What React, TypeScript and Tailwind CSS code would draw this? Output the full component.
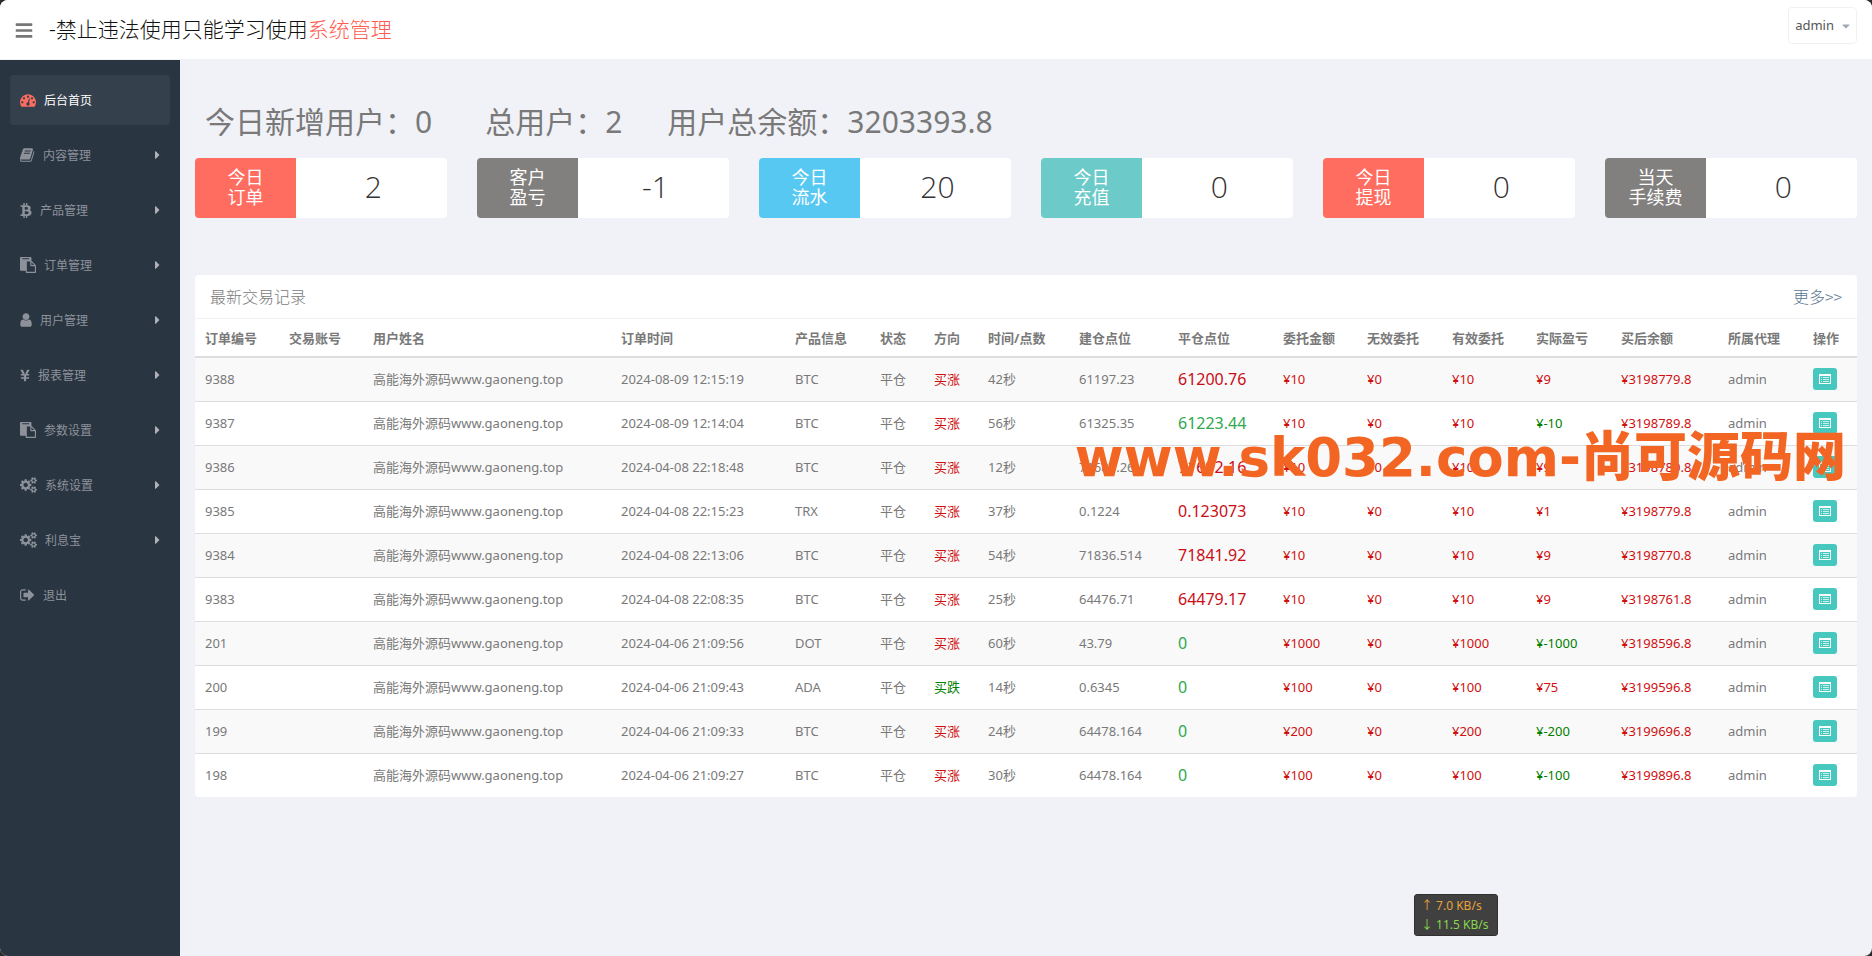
import React from "react"
import { FaBars, FaBtc, FaCaretDown, FaCaretRight, FaYenSign } from "react-icons/fa"

const GlyphIcon = ({ viewBox, className, d }: { viewBox: string; className: string; d: string }) => (
  <svg viewBox={viewBox} className={className} fill="currentColor" aria-hidden="true">
    <path d={d} />
  </svg>
)

const DashboardIcon = () => (
  <GlyphIcon
    viewBox="0 0 1792 1792"
    className="h-4 w-4 text-[#ff6c60]"
    d="M384 1152q0-53-37.5-90.5t-90.5-37.5-90.5 37.5-37.5 90.5 37.5 90.5 90.5 37.5 90.5-37.5 37.5-90.5zm192-448q0-53-37.5-90.5t-90.5-37.5-90.5 37.5-37.5 90.5 37.5 90.5 90.5 37.5 90.5-37.5 37.5-90.5zm428 481l101-382q6-26-7.5-48.5t-38.5-29.5-48 6.5-30 39.5l-101 382q-60 5-107 43.5t-63 98.5q-20 77 20 146t117 89 146-20 89-117q16-60-6-117t-72-91zm660-33q0-53-37.5-90.5t-90.5-37.5-90.5 37.5-37.5 90.5 37.5 90.5 90.5 37.5 90.5-37.5 37.5-90.5zm-640-640q0-53-37.5-90.5t-90.5-37.5-90.5 37.5-37.5 90.5 37.5 90.5 90.5 37.5 90.5-37.5 37.5-90.5zm448 192q0-53-37.5-90.5t-90.5-37.5-90.5 37.5-37.5 90.5 37.5 90.5 90.5 37.5 90.5-37.5 37.5-90.5zm320 448q0 261-141 483-19 29-54 29h-1402q-35 0-54-29-141-221-141-483 0-182 71-348t191-286 286-191 348-71 348 71 286 191 191 286 71 348z"
  />
)

const BookIcon = () => (
  <GlyphIcon
    viewBox="64 0 1664 1792"
    className="h-4 w-[15px]"
    d="M1639 478q40 57 18 129l-275 906q-19 64-76.5 107.5t-122.5 43.5h-923q-77 0-148.5-53.5t-99.5-131.5q-24-67-2-127 0-4 3-27t4-37q1-8-3-21.5t-3-19.5q2-11 8-21t16.5-23.5 16.5-23.5q23-38 45-91.5t30-91.5q3-10 .5-30t-.5-28q3-11 17-28t17-23q21-36 42-92t25-90q1-9-2.5-32t.5-28q4-13 22-30.5t22-22.5q19-26 42.5-84.5t27.5-96.5q1-8-3-25.5t-2-26.5q2-8 9-18t18-23 17-21q8-12 16.5-30.5t15-35 16-36 19.5-32 26.5-23.5 36-11.5 47.5 5.5l-1 3q38-9 51-9h761q74 0 114 56t18 130l-274 906q-36 119-71.5 153.5t-128.5 34.5h-869q-27 0-38 15-11 16-1 43 24 70 144 70h923q29 0 56-15.5t35-41.5l300-987q7-22 5-57 38 15 59 43zm-1064 2q-4 13 2 22.5t20 9.5h608q13 0 25.5-9.5t16.5-22.5l21-64q4-13-2-22.5t-20-9.5h-608q-13 0-25.5 9.5t-16.5 22.5zm-83 256q-4 13 2 22.5t20 9.5h608q13 0 25.5-9.5t16.5-22.5l21-64q4-13-2-22.5t-20-9.5h-608q-13 0-25.5 9.5t-16.5 22.5z"
  />
)

const PasteIcon = () => (
  <GlyphIcon
    viewBox="0 0 1792 1792"
    className="h-4 w-4"
    d="M768 1664h896v-640h-416q-40 0-68-28t-28-68v-416h-384v1152zm256-1440v-64q0-13-9.5-22.5t-22.5-9.5h-704q-13 0-22.5 9.5t-9.5 22.5v64q0 13 9.5 22.5t22.5 9.5h704q13 0 22.5-9.5t9.5-22.5zm256 672h299l-299-299v299zm512 128v672q0 40-28 68t-68 28h-960q-40 0-68-28t-28-68v-160h-544q-40 0-68-28t-28-68v-1344q0-40 28-68t68-28h1088q40 0 68 28t28 68v328q21 13 36 28l408 408q28 28 48 76t20 88z"
  />
)

const UserIcon = () => (
  <GlyphIcon
    viewBox="256 0 1280 1792"
    className="h-4 w-3"
    d="M1536 1399q0 109-62.5 187t-150.5 78h-854q-88 0-150.5-78t-62.5-187q0-85 8.5-160.5t31.5-152 58.5-131 94-89 134.5-34.5q131 128 313 128t313-128q76 0 134.5 34.5t94 89 58.5 131 31.5 152 8.5 160.5zm-256-887q0 159-112.5 271.5t-271.5 112.5-271.5-112.5-112.5-271.5 112.5-271.5 271.5-112.5 271.5 112.5 112.5 271.5z"
  />
)

const CogsIcon = () => (
  <GlyphIcon
    viewBox="0 0 1920 1792"
    className="h-4 w-[17px]"
    d="M896 896q0-106-75-181t-181-75-181 75-75 181 75 181 181 75 181-75 75-181zm768 512q0-52-38-90t-90-38-90 38-38 90q0 53 37.5 90.5t90.5 37.5 90.5-37.5 37.5-90.5zm0-1024q0-52-38-90t-90-38-90 38-38 90q0 53 37.5 90.5t90.5 37.5 90.5-37.5 37.5-90.5zm-384 421v185q0 10-7 19.5t-16 10.5l-155 24q-11 35-32 76 34 48 90 115 7 11 7 20 0 12-7 19-23 30-82.5 89.5t-78.5 59.5q-11 0-21-7l-115-90q-37 19-77 31-11 108-23 155-7 24-30 24h-186q-11 0-20-7.5t-10-17.5l-23-153q-34-10-75-31l-118 89q-7 7-20 7-11 0-21-8-144-133-144-160 0-9 7-19 10-14 41-53t47-61q-23-44-35-82l-152-24q-10-1-17-9.5t-7-19.5v-185q0-10 7-19.5t16-10.5l155-24q11-35 32-76-34-48-90-115-7-11-7-20 0-12 7-20 22-30 82-89t79-59q11 0 21 7l115 90q34-18 77-32 11-108 23-154 7-24 30-24h186q11 0 20 7.5t10 17.5l23 153q34 10 75 31l118-89q8-7 20-7 11 0 21 8 144 133 144 160 0 8-7 19-12 16-42 54t-45 60q23 48 34 82l152 23q10 2 17 10.5t7 19.5zm640 533v140q0 16-149 31-12 27-30 52 51 113 51 138 0 4-4 7-122 71-124 71-8 0-46-47t-52-68q-20 2-30 2t-30-2q-14 21-52 68t-46 47q-2 0-124-71-4-3-4-7 0-25 51-138-18-25-30-52-149-15-149-31v-140q0-16 149-31 13-29 30-52-51-113-51-138 0-4 4-7 4-2 35-20t59-34 30-16q8 0 46 46.5t52 67.5q20-2 30-2t30 2q51-71 92-112l6-2q4 0 124 70 4 3 4 7 0 25-51 138 17 23 30 52 149 15 149 31zm0-1024v140q0 16-149 31-12 27-30 52 51 113 51 138 0 4-4 7-122 71-124 71-8 0-46-47t-52-68q-20 2-30 2t-30-2q-14 21-52 68t-46 47q-2 0-124-71-4-3-4-7 0-25 51-138-18-25-30-52-149-15-149-31v-140q0-16 149-31 13-29 30-52-51-113-51-138 0-4 4-7 4-2 35-20t59-34 30-16q8 0 46 46.5t52 67.5q20-2 30-2t30 2q51-71 92-112l6-2q4 0 124 70 4 3 4 7 0 25-51 138 17 23 30 52 149 15 149 31z"
  />
)

const SignOutIcon = () => (
  <GlyphIcon
    viewBox="64 0 1664 1792"
    className="h-4 w-[15px]"
    d="M704 1440q0 4 1 20t.5 26.5-3 23.5-10 19.5-20.5 6.5h-320q-119 0-203.5-84.5t-84.5-203.5v-704q0-119 84.5-203.5t203.5-84.5h320q13 0 22.5 9.5t9.5 22.5q0 4 1 20t.5 26.5-3 23.5-10 19.5-20.5 6.5h-320q-66 0-113 47t-47 113v704q0 66 47 113t113 47h312l11.5 1 11.5 3 8 5.5 7 9 2 13.5zm928-544q0 26-19 45l-544 544q-19 19-45 19t-45-19-19-45v-288h-448q-26 0-45-19t-19-45v-384q0-26 19-45t45-19h448v-288q0-26 19-45t45-19 45 19l544 544q19 19 19 45z"
  />
)

const ListAltIcon = () => (
  <svg viewBox="0 0 12 10" className="h-[10px] w-3" aria-hidden="true">
    <rect x="0.5" y="0.5" width="11" height="9" fill="none" stroke="#fff" />
    <path d="M0 0h12v2H0z" fill="#fff" />
    <path d="M2 3.5h1M4 3.5h6M2 5.5h1M4 5.5h6M2 7.5h1M4 7.5h6" stroke="#c8f0ed" />
  </svg>
)

const menu = [
  { label: "后台首页", icon: <DashboardIcon />, active: true },
  { label: "内容管理", icon: <BookIcon />, sub: true },
  { label: "产品管理", icon: <FaBtc className="h-[15px] w-3" />, sub: true },
  { label: "订单管理", icon: <PasteIcon />, sub: true },
  { label: "用户管理", icon: <UserIcon />, sub: true },
  { label: "报表管理", icon: <FaYenSign className="h-[15px] w-[10px]" />, sub: true },
  { label: "参数设置", icon: <PasteIcon />, sub: true },
  { label: "系统设置", icon: <CogsIcon />, sub: true },
  { label: "利息宝", icon: <CogsIcon />, sub: true },
  { label: "退出", icon: <SignOutIcon /> },
]

const stats = [
  { label: ["今日", "订单"], value: "2", bg: "bg-[#ff6c60]" },
  { label: ["客户", "盈亏"], value: "-1", bg: "bg-[#82807e]" },
  { label: ["今日", "流水"], value: "20", bg: "bg-[#57c8f2]" },
  { label: ["今日", "充值"], value: "0", bg: "bg-[#6ccac9]" },
  { label: ["今日", "提现"], value: "0", bg: "bg-[#ff6c60]" },
  { label: ["当天", "手续费"], value: "0", bg: "bg-[#82807e]" },
]

const columns = [
  { title: "订单编号", width: "w-[84px]" },
  { title: "交易账号", width: "w-[84px]" },
  { title: "用户姓名", width: "w-[248px]" },
  { title: "订单时间", width: "w-[174px]" },
  { title: "产品信息", width: "w-[85px]" },
  { title: "状态", width: "w-[54px]" },
  { title: "方向", width: "w-[54px]" },
  { title: "时间/点数", width: "w-[91px]" },
  { title: "建仓点位", width: "w-[99px]" },
  { title: "平仓点位", width: "w-[105px]" },
  { title: "委托金额", width: "w-[84px]" },
  { title: "无效委托", width: "w-[85px]" },
  { title: "有效委托", width: "w-[84px]" },
  { title: "实际盈亏", width: "w-[85px]" },
  { title: "买后余额", width: "w-[107px]" },
  { title: "所属代理", width: "w-[85px]" },
  { title: "操作", width: "w-[54px]" },
]

type Order = {
  id: number
  time: string
  product: string
  up: boolean
  seconds: number
  open: string
  close: string
  closeUp: boolean
  amount: number
  profit: number
  balance: string
}

const orders: Order[] = [
  { id: 9388, time: "2024-08-09 12:15:19", product: "BTC", up: true, seconds: 42, open: "61197.23", close: "61200.76", closeUp: true, amount: 10, profit: 9, balance: "3198779.8" },
  { id: 9387, time: "2024-08-09 12:14:04", product: "BTC", up: true, seconds: 56, open: "61325.35", close: "61223.44", closeUp: false, amount: 10, profit: -10, balance: "3198789.8" },
  { id: 9386, time: "2024-04-08 22:18:48", product: "BTC", up: true, seconds: 12, open: "71689.26", close: "71692.16", closeUp: true, amount: 10, profit: 9, balance: "3198780.8" },
  { id: 9385, time: "2024-04-08 22:15:23", product: "TRX", up: true, seconds: 37, open: "0.1224", close: "0.123073", closeUp: true, amount: 10, profit: 1, balance: "3198779.8" },
  { id: 9384, time: "2024-04-08 22:13:06", product: "BTC", up: true, seconds: 54, open: "71836.514", close: "71841.92", closeUp: true, amount: 10, profit: 9, balance: "3198770.8" },
  { id: 9383, time: "2024-04-08 22:08:35", product: "BTC", up: true, seconds: 25, open: "64476.71", close: "64479.17", closeUp: true, amount: 10, profit: 9, balance: "3198761.8" },
  { id: 201, time: "2024-04-06 21:09:56", product: "DOT", up: true, seconds: 60, open: "43.79", close: "0", closeUp: false, amount: 1000, profit: -1000, balance: "3198596.8" },
  { id: 200, time: "2024-04-06 21:09:43", product: "ADA", up: false, seconds: 14, open: "0.6345", close: "0", closeUp: false, amount: 100, profit: 75, balance: "3199596.8" },
  { id: 199, time: "2024-04-06 21:09:33", product: "BTC", up: true, seconds: 24, open: "64478.164", close: "0", closeUp: false, amount: 200, profit: -200, balance: "3199696.8" },
  { id: 198, time: "2024-04-06 21:09:27", product: "BTC", up: true, seconds: 30, open: "64478.164", close: "0", closeUp: false, amount: 100, profit: -100, balance: "3199896.8" },
]

const Header = () => (
  <header className="flex h-[60px] items-start justify-between border-b border-[#f1f2f7] bg-white px-[15px]">
    <div className="flex h-[60px] items-center gap-4">
      <button type="button" aria-label="菜单" className="text-[#777]">
        <FaBars className="h-[19px] w-[18px]" />
      </button>
      <a href="#" className="pb-[2px] text-[21px] leading-[30px] font-light text-[#111]">
        -禁止违法使用只能学习使用<span className="text-[#ff5c50]">系统管理</span>
      </a>
    </div>
    <button
      type="button"
      className="mt-[7px] flex h-[37px] items-center gap-2 rounded border border-[#f1f1f4] px-[6px] text-[13px] text-[#555]"
    >
      admin
      <FaCaretDown className="h-3 w-2 text-[#a1a8b3]" />
    </button>
  </header>
)

const Sidebar = () => (
  <aside className="w-[180px] shrink-0 bg-[#2a3542] px-[10px] py-[15px]">
    <nav className="flex flex-col gap-[5px]">
      {menu.map((item) => (
        <a
          key={item.label}
          href="#"
          className={`flex h-[50px] items-center gap-2 rounded px-[10px] text-xs ${
            item.active ? "bg-[#35404d] text-white" : "text-[#8d929a]"
          }`}
        >
          {item.icon}
          <span className="pt-[2px]">{item.label}</span>
          {item.sub && <FaCaretRight className="ml-auto h-[14px] w-[5px] text-[#aeb2b7]" />}
        </a>
      ))}
    </nav>
  </aside>
)

const Summary = () => (
  <div className="mb-[19px] flex gap-[45px] px-[10px] text-[30px] leading-[34px] text-[#797979]">
    <p className="pr-2">今日新增用户：0</p>
    <p>总用户：2</p>
    <p>用户总余额：3203393.8</p>
  </div>
)

const Stats = () => (
  <div className="grid grid-cols-6 gap-[30px]">
    {stats.map((item) => (
      <section key={item.label.join("")} className="flex h-[60px] overflow-hidden rounded bg-white">
        <div
          className={`flex w-2/5 flex-col items-center justify-center pb-[2px] text-lg leading-5 font-normal text-white ${item.bg}`}
        >
          <span>{item.label[0]}</span>
          <span>{item.label[1]}</span>
        </div>
        <div className="flex w-3/5 items-center justify-center pb-[2px] pl-1 font-['Open_Sans',sans-serif] text-[30px] leading-none font-light text-[#333]">
          {item.value}
        </div>
      </section>
    ))}
  </div>
)

const OrderRow = ({ order }: { order: Order }) => (
  <tr className="h-11 border-t border-[#ddd] odd:bg-[#f9f9f9] [&>td]:px-[10px]">
    <td>{order.id}</td>
    <td></td>
    <td>高能海外源码www.gaoneng.top</td>
    <td>{order.time}</td>
    <td>{order.product}</td>
    <td>平仓</td>
    <td className={order.up ? "text-[#d01010]" : "text-[#008000]"}>{order.up ? "买涨" : "买跌"}</td>
    <td>{order.seconds}秒</td>
    <td>{order.open}</td>
    <td className={`text-base leading-5 ${order.closeUp ? "text-[#c90d16]" : "text-[#2fa84f]"}`}>{order.close}</td>
    <td className="text-[#d01010]">¥{order.amount}</td>
    <td className="text-[#d01010]">¥0</td>
    <td className="text-[#d01010]">¥{order.amount}</td>
    <td className={order.profit < 0 ? "text-[#008000]" : "text-[#d01010]"}>¥{order.profit}</td>
    <td className="text-[#d01010]">¥{order.balance}</td>
    <td>admin</td>
    <td>
      <button
        type="button"
        aria-label="查看"
        className="flex h-[22px] w-6 items-center justify-center rounded-[3px] bg-[#46c8be]"
      >
        <ListAltIcon />
      </button>
    </td>
  </tr>
)

const Orders = () => (
  <section className="overflow-hidden rounded bg-white">
    <div className="flex h-11 items-center justify-between border-b border-[#eff2f7] px-[15px] pb-px font-['Noto_Sans_CJK_SC',sans-serif] text-base font-light">
      <h2>最新交易记录</h2>
      <a href="#" className="text-[#5b7590]">
        更多&gt;&gt;
      </a>
    </div>
    <table className="w-full table-fixed border-collapse text-left text-[13px] leading-5 whitespace-nowrap">
      <colgroup>
        {columns.map((col) => (
          <col key={col.title} className={col.width} />
        ))}
      </colgroup>
      <thead>
        <tr className="h-[38px] border-b-2 border-[#ddd]">
          {columns.map((col) => (
            <th key={col.title} className="px-[10px] font-bold">
              {col.title}
            </th>
          ))}
        </tr>
      </thead>
      <tbody>
        {orders.map((order) => (
          <OrderRow key={order.id} order={order} />
        ))}
      </tbody>
    </table>
  </section>
)

const SpeedWidget = () => (
  <div className="absolute right-[374px] bottom-5 h-[42px] w-[84px] rounded-[3px] border border-[#303030] bg-[#404040] px-[6px] py-px text-xs leading-[19px] whitespace-nowrap">
    <p className="text-[#e8a23a]">↑ 7.0 KB/s</p>
    <p className="text-[#86d84a]">↓ 11.5 KB/s</p>
  </div>
)

const App = () => {
  return (
    <div className="bg-[#2b2b2b] font-['Noto_Sans','Noto_Sans_CJK_SC',sans-serif] text-[#797979]">
      <div className="relative flex min-h-screen flex-col overflow-hidden rounded-lg bg-[#f1f2f7]">
        <Header />
        <div className="flex flex-1">
          <Sidebar />
          <main className="min-w-0 flex-1 px-[15px] pt-[45px]">
            <Summary />
            <Stats />
            <div className="mt-[57px]">
              <Orders />
            </div>
          </main>
        </div>
        <div className="pointer-events-none absolute top-[428px] right-[26px] font-['DejaVu_Sans','Noto_Sans_CJK_SC',sans-serif] text-[53px] leading-[60px] font-black whitespace-nowrap text-[#f26522]">
          www.sk032.com-尚可源码网
        </div>
        <SpeedWidget />
      </div>
    </div>
  )
}

export default App
